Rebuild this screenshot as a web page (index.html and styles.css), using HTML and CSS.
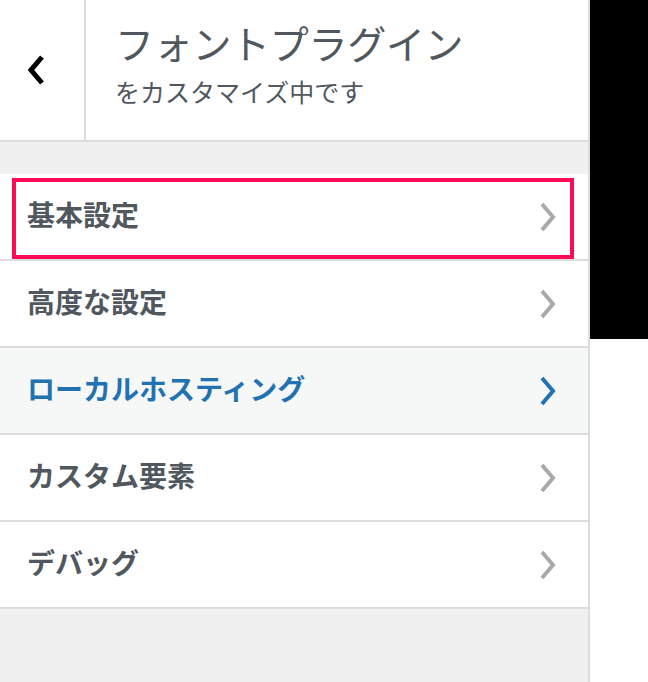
FILE: index.html
```html
<!DOCTYPE html>
<html lang="ja">
<head>
<meta charset="utf-8">
<title>フォントプラグイン</title>
<link rel="stylesheet" href="styles.css">
</head>
<body>
	<div id="ecran">
		<div id="panneau">
			<div class="entete">
				<a class="retour" href="#" title="戻る">
					<svg width="20" height="32" viewBox="0 0 20 32"><path d="M16 3 L5 16 L16 29" fill="none" stroke="#000" stroke-width="5"/></svg>
				</a>
				<div class="titres">
					<h1 class="titre">フォントプラグイン</h1>
					<p class="sous_titre">をカスタマイズ中です</p>
				</div>
			</div>

			<ul class="sections">
				<li class="section section_choisie">
					<span>基本設定</span>
					<svg class="fleche" width="20" height="30" viewBox="0 0 20 30"><path d="M4 2 L15 15 L4 28" fill="none" stroke="currentColor" stroke-width="4"/></svg>
				</li>
				<li class="section">
					<span>高度な設定</span>
					<svg class="fleche" width="20" height="30" viewBox="0 0 20 30"><path d="M4 2 L15 15 L4 28" fill="none" stroke="currentColor" stroke-width="4"/></svg>
				</li>
				<li class="section section_active">
					<span>ローカルホスティング</span>
					<svg class="fleche" width="20" height="30" viewBox="0 0 20 30"><path d="M4 2 L15 15 L4 28" fill="none" stroke="currentColor" stroke-width="4"/></svg>
				</li>
				<li class="section">
					<span>カスタム要素</span>
					<svg class="fleche" width="20" height="30" viewBox="0 0 20 30"><path d="M4 2 L15 15 L4 28" fill="none" stroke="currentColor" stroke-width="4"/></svg>
				</li>
				<li class="section">
					<span>デバッグ</span>
					<svg class="fleche" width="20" height="30" viewBox="0 0 20 30"><path d="M4 2 L15 15 L4 28" fill="none" stroke="currentColor" stroke-width="4"/></svg>
				</li>
			</ul>
		</div>
		<div id="apercu"></div>
	</div>
</body>
</html>
```

FILE: styles.css
```css
	html, body {
		margin: 0;
		padding: 0;
		height: 100%;
	}

	body {
		font-family: "Noto Sans CJK JP", "Noto Sans", sans-serif;
		color: #50575e;
		background: #fff;
	}

	div#ecran {
		display: flex;
		align-items: flex-start;
		height: 682px;
	}

	div#panneau {
		width: 588px;
		height: 682px;
		border-right: 2px solid #dcdcde;
		background: #f0f0f0;
	}

	div#apercu {
		width: 58px;
		height: 339px;
		background: #000;
	}

	.entete {
		display: flex;
		height: 140px;
		background: #fff;
		border-bottom: 2px solid #dcdcde;
	}

	.retour {
		width: 86px;
		border-right: 2px solid #dcdcde;
		display: flex;
		align-items: center;
		justify-content: center;
		padding-right: 12px;
		box-sizing: border-box;
	}

	.titres {
		padding: 16px 0 0 29px;
	}

	.titre {
		margin: 0;
		font-size: 39px;
		font-weight: normal;
		line-height: 52px;
		letter-spacing: -0.3px;
	}

	.sous_titre {
		margin: 5px 0 0 0;
		font-size: 25px;
		line-height: 36px;
	}

	.sections {
		list-style: none;
		margin: 32px 0 0 0;
		padding: 0;
	}

	.section {
		position: relative;
		display: flex;
		align-items: center;
		justify-content: space-between;
		height: 85px;
		padding: 0 30px 0 27px;
		border-bottom: 2px solid #dcdcde;
		background: #fff;
		font-size: 28px;
		font-weight: bold;
		color: #50575e;
	}

	.section span {
		margin-bottom: 6px;
	}

	.section .fleche {
		color: #a7aaad;
	}

	.section_active {
		background: #f6f7f7;
		color: #2271b1;
	}

	.section_active .fleche {
		color: #2271b1;
	}

	.section_choisie::after {
		content: "";
		position: absolute;
		top: 4px;
		left: 12px;
		right: 14px;
		bottom: 0px;
		border: 4px solid #ff0a55;
	}
```
